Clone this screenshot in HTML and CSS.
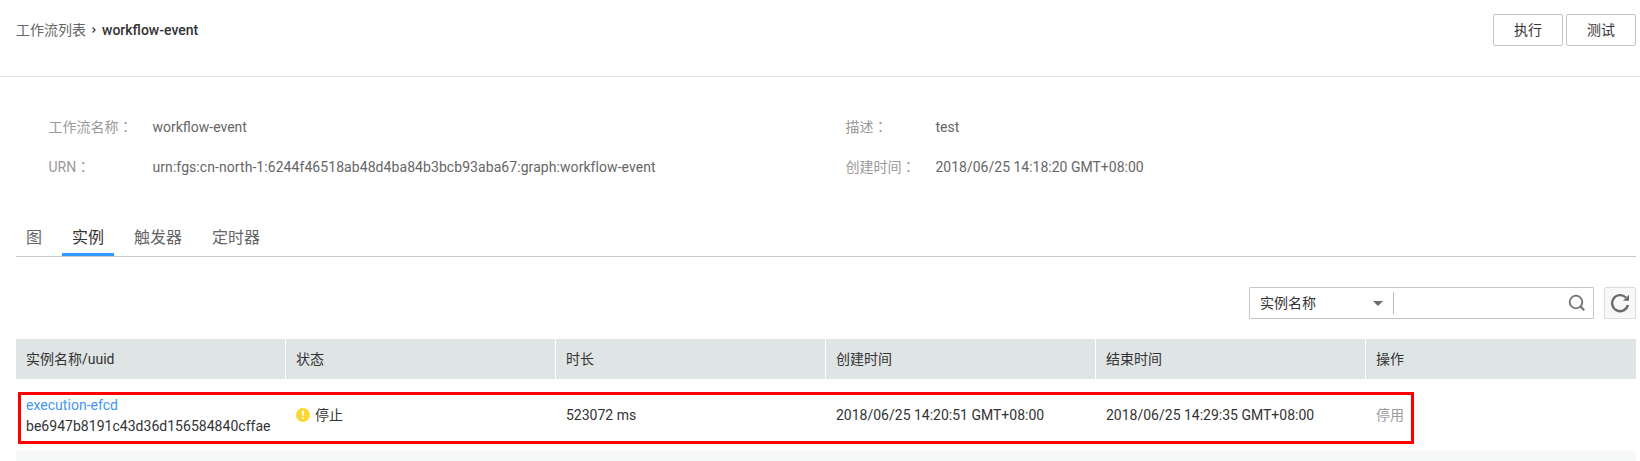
FILE: index.html
```
<!DOCTYPE html>
<html lang="zh-CN">
<head>
<meta charset="utf-8">
<title>workflow-event</title>
<link rel="stylesheet" href="styles.css">
</head>
<body>
<header class="topbar">
  <nav class="crumbs">
    <a class="crumb">工作流列表</a>
    <svg class="crumb-arrow" width="4" height="6" viewBox="0 0 4 6"><path d="M.6.5 3.1 3 .6 5.5" fill="none" stroke="#444" stroke-width="1.3"/></svg>
    <span class="crumb-current">workflow-event</span>
  </nav>
  <div class="actions">
    <button class="btn">执行</button>
    <button class="btn">测试</button>
  </div>
</header>

<dl class="details">
  <dt>工作流名称<span class="colon" lang="zh-TW">：</span></dt><dd>workflow-event</dd>
  <dt>描述<span class="colon" lang="zh-TW">：</span></dt><dd>test</dd>
  <dt>URN<span class="colon" lang="zh-TW">：</span></dt><dd class="urn">urn:fgs:cn-north-1:6244f46518ab48d4ba84b3bcb93aba67:graph:workflow-event</dd>
  <dt>创建时间<span class="colon" lang="zh-TW">：</span></dt><dd>2018/06/25 14:18:20 GMT+08:00</dd>
</dl>

<main class="main">
  <nav class="tabs">
    <a class="tab">图</a>
    <a class="tab tab-active">实例</a>
    <a class="tab">触发器</a>
    <a class="tab">定时器</a>
  </nav>

  <div class="toolbar">
    <div class="search">
      <div class="search-field">
        <span>实例名称</span>
        <svg width="10" height="5" viewBox="0 0 10 5"><path d="M0 0h10L5 5z" fill="#6b6b6b"/></svg>
      </div>
      <svg class="search-icon" width="18" height="18" viewBox="0 0 18 18"><circle cx="8" cy="8" r="6.3" fill="none" stroke="#757575" stroke-width="1.8"/><path d="M12.3 12.3l3.9 3.9" stroke="#757575" stroke-width="2.2"/></svg>
    </div>
    <button class="refresh">
      <svg width="20" height="20" viewBox="0 0 20 20"><path d="M17.9 12A8 8 0 1 1 15.8 4.5" fill="none" stroke="#6b6b6b" stroke-width="2.4"/><path d="M19 1.8v6h-6z" fill="#6b6b6b"/></svg>
    </button>
  </div>

  <div class="table">
    <div class="row row-head">
      <div class="cell">实例名称/uuid</div>
      <div class="cell">状态</div>
      <div class="cell">时长</div>
      <div class="cell">创建时间</div>
      <div class="cell">结束时间</div>
      <div class="cell">操作</div>
    </div>
    <div class="row row-body">
      <div class="cell"><div class="names"><a class="link">execution-efcd</a><span>be6947b8191c43d36d156584840cffae</span></div></div>
      <div class="cell status">
        <svg width="14" height="14" viewBox="0 0 14 14"><circle cx="7" cy="7" r="7" fill="#fdd835"/><path d="M6 2.8h2l-.3 5H6.3z" fill="#fff"/><circle cx="7" cy="10" r="1.1" fill="#fff"/></svg>
        <span>停止</span>
      </div>
      <div class="cell">523072 ms</div>
      <div class="cell">2018/06/25 14:20:51 GMT+08:00</div>
      <div class="cell">2018/06/25 14:29:35 GMT+08:00</div>
      <div class="cell disabled">停用</div>
      <div class="highlight"></div>
    </div>
    <div class="row-next"></div>
  </div>
</main>
</body>
</html>
```
FILE: styles.css
```
* { box-sizing: border-box; }
body {
  margin: 0;
  height: 461px;
  overflow: hidden;
  background: #fff;
  color: #333;
  font: 14px/20px Roboto, "Noto Sans CJK SC", sans-serif;
}
.topbar {
  display: flex;
  justify-content: space-between;
  height: 77px;
  padding: 14px 4px 0 16px;
  border-bottom: 1px solid #dfe1e1;
}
.crumbs {
  display: flex;
  align-items: center;
  height: 32px;
}
.crumb { color: #666; }
.crumb-arrow { margin: 0 6px; }
.crumb-current { font-weight: 500; color: #333; }
.actions { display: flex; gap: 3px; }
.btn {
  width: 70px;
  height: 32px;
  padding: 0;
  border: 1px solid #c6c6c6;
  border-radius: 2px;
  background: #fff;
  color: #333;
  font: inherit;
}
.details {
  display: grid;
  grid-template-columns: 104px 693px 90px 1fr;
  grid-auto-rows: 40px;
  align-items: center;
  margin: 0;
  padding: 30px 0 0 48.5px;
  color: #666;
}
.details dt { height: 20px; color: #999; }
.details dd { margin: 0; }
.urn { letter-spacing: .07px; }
.colon {
  font-family: "Noto Sans CJK TC", sans-serif;
  line-height: 1;
}
.main { padding: 32px 4px 0 16px; }
.tabs {
  display: flex;
  gap: 10px;
  height: 38px;
  border-bottom: 1px solid #c8cacb;
}
.tab {
  height: 37px;
  padding: 0 10px;
  border-bottom: 3px solid transparent;
  color: #666;
  font-size: 16px;
  line-height: 38px;
}
.tab-active { border-bottom-color: #3399ff; color: #333; }
.toolbar {
  display: flex;
  justify-content: flex-end;
  gap: 10px;
  padding: 30px 0 20px;
}
.search {
  display: flex;
  align-items: center;
  justify-content: space-between;
  width: 345px;
  height: 32px;
  padding-right: 7px;
  border: 1px solid #c6c6c6;
  border-radius: 1px;
}
.search-field {
  display: flex;
  align-items: center;
  justify-content: space-between;
  width: 144px;
  height: 22px;
  padding: 0 10px;
  border-right: 1px solid #bbb;
}
.refresh {
  display: flex;
  align-items: center;
  justify-content: center;
  width: 32px;
  height: 32px;
  padding: 0;
  border: 1px solid #dcdcdc;
  border-radius: 2px;
  background: #f8f8f8;
}
.row {
  display: grid;
  grid-template-columns: repeat(6, 270px);
}
.cell {
  display: flex;
  align-items: center;
  padding-left: 10px;
}
.row-head { height: 40px; }
.row-head .cell {
  background: #dfe4e4;
  border-right: 1px solid #fff;
}
.row-head .cell:last-of-type { border-right: 0; }
.row-body { position: relative; height: 72px; }
.names {
  display: flex;
  flex-direction: column;
  padding-top: 2px;
  line-height: 21px;
  letter-spacing: .03px;
}
.link { color: #4396f3; }
.status { gap: 5px; }
.disabled { color: #999; }
/* Frame laid over the instance row */
.highlight {
  position: absolute;
  left: 2px;
  top: 13px;
  width: 1396px;
  height: 52px;
  border: 3px solid #f00;
}
.row-next { height: 10px; background: #f7f9f8; }
```
